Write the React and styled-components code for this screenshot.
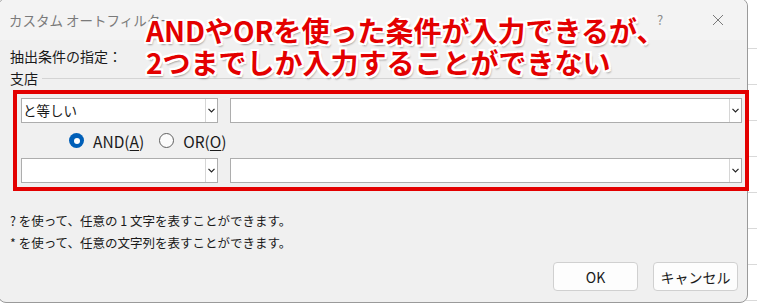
import React from 'react';
import styled, { createGlobalStyle } from 'styled-components';

const GlobalStyle = createGlobalStyle`
  html, body {
    margin: 0;
    padding: 0;
    width: 757px;
    height: 304px;
    overflow: hidden;
  }
  body {
    font-family: "Noto Sans CJK JP", "Noto Sans", sans-serif;
    background-color: #ffffff;
    background-image:
      repeating-linear-gradient(to bottom, transparent 0, transparent 35px, #d9d9d9 35px, #d9d9d9 36px);
    background-position: 0 13px;
  }
`;

const Dialog = styled.div`
  position: relative;
  box-sizing: border-box;
  margin: -2px 0 0 -2px;
  width: 750px;
  height: 305px;
  background: #f0f0f0;
  border: 1px solid #9a9a9a;
  border-radius: 8px;
  display: flex;
  flex-direction: column;
  color: #1a1a1a;
`;

const TitleBar = styled.div`
  display: flex;
  align-items: center;
  height: 41px;
  padding: 0 0 0 10px;
  box-sizing: border-box;
  background: #f3f3f3;
  border-radius: 8px 8px 0 0;
  font-size: 13.5px;
  color: #7a7a7a;
`;

const Title = styled.div`
  flex: 1;
  padding-top: 1px;
`;

const TitleButton = styled.div`
  width: ${(p) => p.$w}px;
  display: flex;
  justify-content: center;
  align-items: center;
  color: #8a8a8a;
  font-size: 13px;
`;

const Body = styled.div`
  flex: 1;
  display: flex;
  flex-direction: column;
  padding: 6px 0 0 11px;
`;

const Label = styled.div`
  font-size: 14px;
  line-height: 20px;
  height: 20px;
`;

const GroupHead = styled.div`
  display: flex;
  align-items: center;
  gap: 4px;
  margin-top: 2px;
  font-size: 14px;
  line-height: 20px;
  &::after {
    content: '';
    flex: 1;
    height: 1px;
    background: #d4d4d4;
    margin-right: 7px;
  }
`;

const Highlight = styled.div`
  margin: 2px 0 0 3px;
  width: 736px;
  box-sizing: border-box;
  border: 4px solid #e30000;
  padding: 4px 3px 4px 4px;
  display: flex;
  flex-direction: column;
`;

const Row = styled.div`
  display: flex;
  gap: 12px;
`;

const Combo = styled.div`
  box-sizing: border-box;
  width: ${(p) => p.$w}px;
  height: 25px;
  background: #ffffff;
  border: 1px solid #adadad;
  display: flex;
  align-items: center;
  font-size: 13.5px;
`;

const ComboText = styled.div`
  flex: 1;
  padding-left: 1px;
  line-height: 23px;
`;

const ComboButton = styled.div`
  width: 11px;
  height: 23px;
  border-left: 1px solid #d6d6d6;
  display: flex;
  align-items: center;
  justify-content: center;
`;

const RadioRow = styled.div`
  display: flex;
  align-items: center;
  height: 35px;
  padding-left: 48px;
  gap: 15px;
`;

const RadioItem = styled.label`
  display: flex;
  align-items: center;
  gap: 9px;
  font-size: 15.5px;
  u {
    text-decoration-thickness: 1px;
    text-underline-offset: 2px;
  }
`;

const RadioDot = styled.span`
  box-sizing: border-box;
  width: 15px;
  height: 15px;
  border-radius: 50%;
  display: inline-flex;
  align-items: center;
  justify-content: center;
  background: ${(p) => (p.$on ? '#005fb8' : '#fbfbfb')};
  border: ${(p) => (p.$on ? 'none' : '1px solid #5f5f5f')};
  &::after {
    content: '';
    width: 6px;
    height: 6px;
    border-radius: 50%;
    background: #ffffff;
    display: ${(p) => (p.$on ? 'block' : 'none')};
  }
`;

const Hint = styled.div`
  font-size: 12.5px;
  line-height: 22px;
`;

const Hints = styled.div`
  margin-top: 19px;
`;

const Footer = styled.div`
  margin-top: auto;
  display: flex;
  justify-content: flex-end;
  gap: 15px;
  padding: 0 9px 11px 0;
`;

const Button = styled.button`
  box-sizing: border-box;
  width: 85px;
  height: 29px;
  background: #fdfdfd;
  border: 1px solid #d0d0d0;
  border-radius: 4px;
  font-family: inherit;
  font-size: 14px;
  color: #1a1a1a;
  padding: 0;
`;

const Callout = styled.div`
  position: absolute;
  left: 147px;
  top: 15px;
  font-size: 28px;
  font-weight: 700;
  line-height: 32px;
  color: #e30000;
  white-space: nowrap;
  text-shadow:
    -2px -2px 0 #fff, 2px -2px 0 #fff, -2px 2px 0 #fff, 2px 2px 0 #fff,
    0 -2px 0 #fff, 0 2px 0 #fff, -2px 0 0 #fff, 2px 0 0 #fff,
    2px 3px 2px rgba(0, 0, 0, 0.35);
`;

const Chevron = () => (
  <svg width="7" height="5" viewBox="0 0 7 5">
    <path d="M0.5 0.8 L3.5 3.8 L6.5 0.8" fill="none" stroke="#222" strokeWidth="1.2" />
  </svg>
);

const Close = () => (
  <svg width="12" height="12" viewBox="0 0 12 12">
    <path d="M1 1 L11 11 M11 1 L1 11" stroke="#7a7a7a" strokeWidth="1" />
  </svg>
);

function ComboBox({ width, value }) {
  return (
    <Combo $w={width}>
      <ComboText>{value}</ComboText>
      <ComboButton>
        <Chevron />
      </ComboButton>
    </Combo>
  );
}

export default function App() {
  return (
    <>
      <GlobalStyle />
      <Dialog>
        <TitleBar>
          <Title>カスタム オートフィルター</Title>
          <TitleButton $w={58}>?</TitleButton>
          <TitleButton $w={58}>
            <Close />
          </TitleButton>
        </TitleBar>
        <Body>
          <Label>抽出条件の指定：</Label>
          <GroupHead>支店</GroupHead>
          <Highlight>
            <Row>
              <ComboBox width={198} value="と等しい" />
              <ComboBox width={513} value="" />
            </Row>
            <RadioRow>
              <RadioItem>
                <RadioDot $on />
                <span>
                  AND(<u>A</u>)
                </span>
              </RadioItem>
              <RadioItem>
                <RadioDot />
                <span>
                  OR(<u>O</u>)
                </span>
              </RadioItem>
            </RadioRow>
            <Row>
              <ComboBox width={198} value="" />
              <ComboBox width={513} value="" />
            </Row>
          </Highlight>
          <Hints>
            <Hint>? を使って、任意の 1 文字を表すことができます。</Hint>
            <Hint>* を使って、任意の文字列を表すことができます。</Hint>
          </Hints>
          <Footer>
            <Button>OK</Button>
            <Button>キャンセル</Button>
          </Footer>
        </Body>
        <Callout>
          ANDやORを使った条件が入力できるが、
          <br />
          2つまでしか入力することができない
        </Callout>
      </Dialog>
    </>
  );
}
